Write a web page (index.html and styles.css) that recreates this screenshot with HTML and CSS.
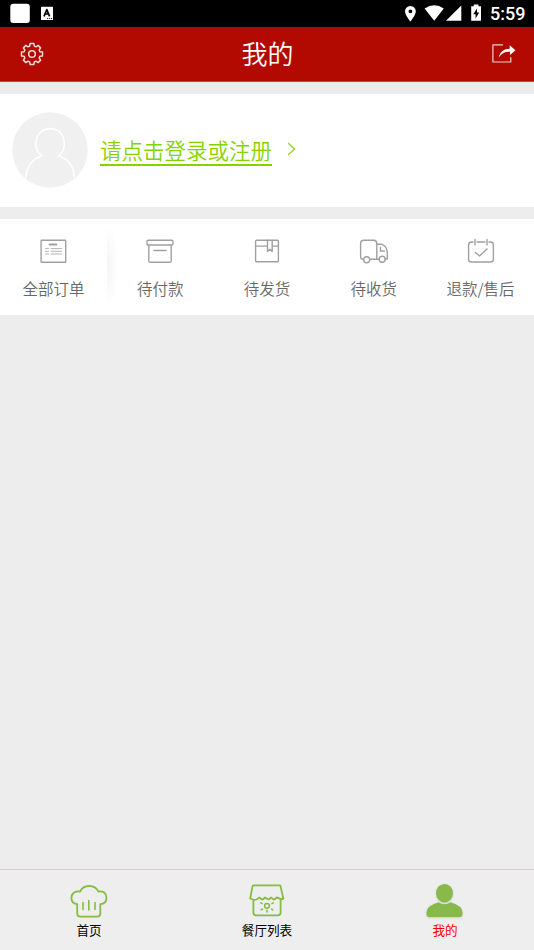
FILE: index.html
```html
<!DOCTYPE html>
<html lang="zh-CN">
<head>
<meta charset="utf-8">
<title>我的</title>
<link rel="stylesheet" href="styles.css">
</head>
<body>
<div class="screen">
  <div class="status">
    <svg class="status-left" viewBox="0 0 60 27"><rect x="10.3" y="3.7" width="19.5" height="19.3" rx="3"/><rect x="41" y="6.7" width="12" height="13.2" rx=".5"/><path class="letter-mark" d="M44 16.3 46.8 9.6 49.6 16.3M45 14h3.6"/><path class="dots" d="M47.2 18.5h5"/></svg>
    <svg class="status-right" viewBox="400 0 90 27"><path fill-rule="evenodd" d="M410.4 6a5.3 5.3 0 0 0-5.4 5.3c0 4 5.4 10.200 5.400 10.200s5.400-6.200 5.400-10.200A5.300 5.300 0 0 0 410.400 6zm0 3.400a1.900 1.900 0 1 1 0 3.800 1.900 1.900 0 0 1 0-3.800z"/><path d="M424.600 8.600Q434.200 1.700 443.800 8.600L434.200 20.700z"/><path d="M461.300 5.400V20.700H446z"/><path fill-rule="evenodd" d="M471.200 6.200h2.600V4.600h4.600v1.600h2.600V20.700h-9.800zM477 8.400l-3.800 5.800h2.400v4.400l3.600-6h-2.200z"/></svg>
    <span class="clock">5:59</span>
  </div>
  <header class="header">
    <svg class="gear" viewBox="-12 -12 24 24"><path d="M7.900-2.300 10.500-1.900V1.900L7.900 2.300 7.200 4 8.600 6.100 6.100 8.600 4 7.200 2.300 7.900 1.900 10.500H-1.900L-2.300 7.900-4 7.200-6.100 8.600-8.600 6.100-7.200 4-7.900 2.300-10.500 1.900V-1.900L-7.900-2.300-7.200-4-8.600-6.100-6.100-8.600-4-7.200-2.300-7.900-1.900-10.500H1.900L2.300-7.900 4-7.200 6.100-8.600 8.600-6.100 7.200-4z"/><circle r="3.300"/></svg>
    <h1>我的</h1>
    <svg class="share" viewBox="491 42 26 22"><path class="box" d="M502.500 44.900H492.900V62H510.800V57.500"/><path class="arrow" d="M498.800 57.500C500 51.500 504 48.800 509.700 48.700V45.300L515.400 50.200 510 55V51.700C505 51.300 501.500 53 498.800 57.500z"/></svg>
  </header>
  <section class="profile">
    <svg class="avatar" viewBox="0 0 76 76"><circle class="disc" cx="38" cy="38" r="37.700"/><path d="M14 65C14.500 55 20 47.500 29.800 43.800 20 38 22 16.600 38.200 16.600S56 38 46.800 43.800C56.500 47.500 62 55 62.200 65"/></svg>
    <a class="login">请点击登录或注册</a>
    <svg class="chevron" viewBox="0 0 10 14"><path d="M1.500 1.500 7.600 7 1.500 12.500"/></svg>
  </section>
  <nav class="orders">
    <a class="order all"><svg viewBox="0 0 30 28"><rect x="3.100" y="3.300" width="24.600" height="22" rx=".5"/><path d="M11.500 7.500h7" stroke-width="1.800"/><path d="M7.500 11.600h3M7.500 14.300h3M7.500 17h3M13 11.600h10.500M13 14.300h10.500M13 17h10.500" stroke-width=".8"/></svg>全部订单</a>
    <a class="order"><svg viewBox="0 0 30 28"><rect x="2" y="3.200" width="26" height="4.800" rx="1"/><path d="M3.800 8V23.800q0 1.400 1.400 1.400H24.800q1.400 0 1.400-1.400V8M9 13.500h12"/></svg>待付款</a>
    <a class="order"><svg viewBox="0 0 30 28"><rect x="3.600" y="3.300" width="22.800" height="21.500" rx="1"/><path d="M3.600 9.100H15.500M20.200 9.100h6.200M15.500 3.300V14.500l2.400-2.200 2.300 2.200V3.300"/></svg>待发货</a>
    <a class="order"><svg viewBox="0 0 30 28"><path d="M4.500 22.200H3.600Q1.600 22.200 1.600 19V6.500Q1.600 3.300 4.600 3.300H14.800Q17.800 3.300 17.800 6.500V22.200H11M17.800 7.300H23Q28.300 9.500 28.300 16V22H26.300M17.800 22.200h2.300M21.500 10.500V14h4"/><circle cx="7.700" cy="22.700" r="3"/><circle cx="23.200" cy="22.200" r="3"/></svg>待收货</a>
    <a class="order"><svg viewBox="0 0 30 28"><path d="M7 5H5.500Q2.600 5 2.600 8V22.200Q2.600 25 5.500 25H24.500Q27.400 25 27.400 22.200V8Q27.400 5 24.500 5H23M11 5h8M9 2.500v5.500M21 2.500v5.500M9.500 15.500l4 3.500 7.500-7"/></svg>退款/售后</a>
  </nav>
  <footer class="tabs">
    <a class="tab"><svg viewBox="0 0 44 40"><path d="M10.200 24.200C6 23.500 4.400 20.500 4.400 18 4.500 13 8.500 10.600 13.100 11.500 15 7.500 18.500 6 22.200 6S29.500 7.500 31.300 11.500C36 10.600 39.500 13 39.500 18 39.500 21 37.500 23.800 33.300 24.200V33.500Q33.300 36.600 30.200 36.600H13.300Q10.200 36.600 10.200 33.500z"/><path class="steam" d="M16 22.500v7M21.800 20.500v9.500M28 22.500v7"/></svg>首页</a>
    <a class="tab"><svg viewBox="0 0 44 40"><path d="M8.500 5.300H35.300L38.400 18.700C36 20.500 34 17.500 31.500 17.500 29 21.500 28 18.500 25.800 17.500 23.500 21 22 18.500 19.900 17.500 17.500 21 16 18.500 14.100 17.500 11.500 21 9 20.500 5.200 18.500L7.400 6.800Q7.600 5.300 8.500 5.300zM8.400 20.200V32.500Q8.400 35.400 11.300 35.400H32.700Q35.600 35.400 35.600 32.500V20.200"/><g stroke-width="1.500"><circle cx="22" cy="25.800" r="2.400"/><path d="M22 30.200v1.800M15.700 22.900l1.400.7M28.300 22.900l-1.400.7M16.200 29.900l1.200-.8M27.800 29.900l-1.200-.8"/></g></svg>餐厅列表</a>
    <a class="tab active"><svg viewBox="0 0 44 40"><ellipse cx="21.500" cy="13.200" rx="8.400" ry="9.300"/><path d="M3.500 33Q3.500 25.500 15.500 22.200 21.500 26.200 27.500 22.200 39.500 25.500 39.500 33V34Q39.500 36.900 36.500 36.900H6.500Q3.500 36.900 3.500 34z"/></svg>我的</a>
  </footer>
</div>
</body>
</html>
```

FILE: styles.css
```css
* { box-sizing: border-box; }
body { margin: 0; font-family: "Noto Sans CJK SC", sans-serif; }
svg { display: block; flex: none; fill: none; stroke-linecap: round; stroke-linejoin: round; }
.screen { width: 534px; height: 950px; display: flex; flex-direction: column; background: #ededed; }

.status { height: 27px; flex: none; display: flex; align-items: center; background: #000; color: #fff; }
.status svg { height: 27px; fill: #fff; }
.status-left { width: 60px; }
.status-left .letter-mark { fill: none; stroke: #000; stroke-width: 1.7; stroke-linecap: butt; }
.status-left .dots { stroke: #000; stroke-width: 1; stroke-dasharray: 1 1; stroke-linecap: butt; }
.status-right { width: 90px; margin-left: auto; }
.clock { width: 44px; font: 500 18px/27px Roboto, sans-serif; }

.header { height: 55px; flex: none; display: flex; align-items: center; justify-content: space-between; padding: 0 17px 0 20px; background: #b20a00; border-bottom: 1px solid #c84840; }
.header h1 { margin: 0; padding-bottom: 2px; font-size: 26px; line-height: 52px; font-weight: 350; color: #fff; }
.gear { width: 24px; height: 24px; stroke: #f5dcda; stroke-width: 1.5; }
.share { width: 26px; height: 22px; margin-bottom: 2px; }
.share .box { stroke: #f0cecc; stroke-width: 1.2; }
.share .arrow { fill: #fff; }

.profile { height: 112.5px; flex: none; margin-top: 12px; padding-left: 12px; display: flex; align-items: center; background: #fff; }
.avatar { width: 76px; height: 76px; margin-bottom: 1px; stroke: #fff; stroke-width: 1.6; }
.avatar .disc { fill: #f0f0f0; stroke: none; }
.login { margin: 0 0 0 12px; font-size: 21.5px; line-height: 29px; font-weight: 350; color: #86d200; border-bottom: 2px solid #86d200; }
.chevron { width: 10px; height: 14px; margin: -3px 0 0 15px; stroke: #91d51c; stroke-width: 1.3; }

.orders { height: 96px; flex: none; margin-top: 12.5px; display: grid; grid-template-columns: repeat(5, 1fr); background: #fff; }
.order { display: flex; flex-direction: column; align-items: center; padding-top: 18px; font-size: 15.5px; line-height: 22px; font-weight: 350; color: #686868; white-space: nowrap; }
.order svg { width: 30px; height: 28px; margin-bottom: 12px; stroke: #a0a0a0; stroke-width: 1.4; }
.order.all { position: relative; }
.order.all::after { content: ""; position: absolute; left: 107px; top: 4px; width: 11px; height: 86px; background: radial-gradient(ellipse at left center, #f5f5f5, #fff 72%); }

.tabs { height: 81px; flex: none; margin-top: auto; display: grid; grid-template-columns: repeat(3, 1fr); border-top: 1px solid #d6d0d2; background: #eee; }
.tab { display: flex; flex-direction: column; align-items: center; padding-top: 10px; font-size: 12.6px; line-height: 18px; color: #000; }
.tab svg { width: 44px; height: 40px; margin-bottom: 1px; stroke: #84bd42; stroke-width: 1.8; }
.tab .steam { stroke-width: 1.6; }
.tab.active { color: #f00; }
.tab.active svg { fill: #87b94b; stroke: none; filter: drop-shadow(0 1px 1px #ccc); }
```
